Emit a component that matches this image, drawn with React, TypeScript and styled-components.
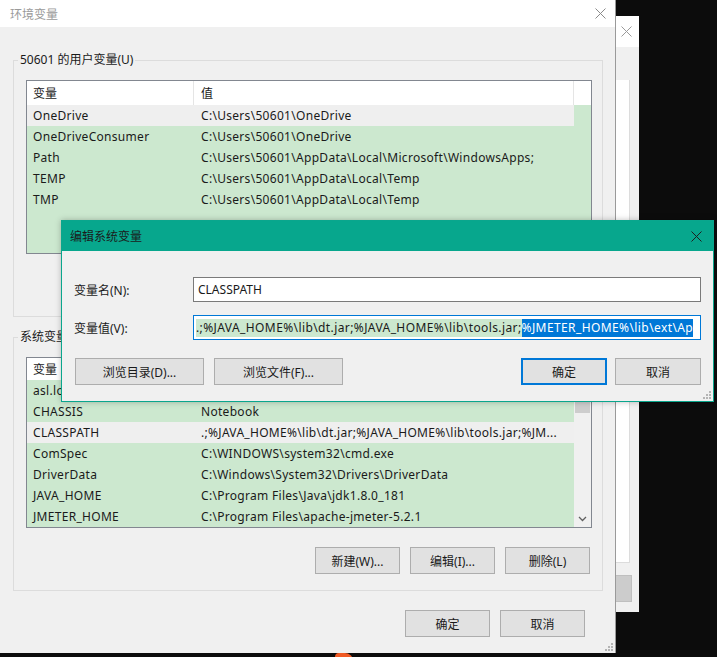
import React from "react";
import styled, { createGlobalStyle } from "styled-components";

const GlobalStyle = createGlobalStyle`
  html, body {
    margin: 0;
    padding: 0;
    background: #0c0c0c;
  }
  body {
    font-family: "Noto Sans", "Noto Sans CJK SC", sans-serif;
    font-size: 12px;
    color: #1a1a1a;
  }
  * {
    box-sizing: border-box;
  }
`;

type Col = { name: string; value: string; selected?: boolean };

const userVars: Col[] = [
  { name: "OneDrive", value: "C:\\Users\\50601\\OneDrive", selected: true },
  { name: "OneDriveConsumer", value: "C:\\Users\\50601\\OneDrive" },
  { name: "Path", value: "C:\\Users\\50601\\AppData\\Local\\Microsoft\\WindowsApps;" },
  { name: "TEMP", value: "C:\\Users\\50601\\AppData\\Local\\Temp" },
  { name: "TMP", value: "C:\\Users\\50601\\AppData\\Local\\Temp" },
];

const systemVars: Col[] = [
  { name: "asl.log", value: "Destination=file" },
  { name: "CHASSIS", value: "Notebook" },
  {
    name: "CLASSPATH",
    value: ".;%JAVA_HOME%\\lib\\dt.jar;%JAVA_HOME%\\lib\\tools.jar;%JM...",
    selected: true,
  },
  { name: "ComSpec", value: "C:\\WINDOWS\\system32\\cmd.exe" },
  { name: "DriverData", value: "C:\\Windows\\System32\\Drivers\\DriverData" },
  { name: "JAVA_HOME", value: "C:\\Program Files\\Java\\jdk1.8.0_181" },
  { name: "JMETER_HOME", value: "C:\\Program Files\\apache-jmeter-5.2.1" },
];

const CloseIcon = ({ color }: { color: string }) => (
  <svg width="11" height="11" viewBox="0 0 11 11">
    <path d="M0.5 0.5 L10.5 10.5 M10.5 0.5 L0.5 10.5" stroke={color} strokeWidth="1" fill="none" />
  </svg>
);

const Grip = () => (
  <GripBox width="10" height="10" viewBox="0 0 10 10">
    {[
      [8, 2],
      [8, 5],
      [5, 5],
      [8, 8],
      [5, 8],
      [2, 8],
    ].map(([x, y]) => (
      <rect key={`${x}-${y}`} x={x} y={y} width="2" height="2" fill="#b4b4b4" />
    ))}
  </GripBox>
);

const VarList = ({
  rows,
  height,
  headerHeight,
  scroll,
}: {
  rows: Col[];
  height: number;
  headerHeight: number;
  scroll?: boolean;
}) => (
  <ListView $height={height}>
    <ListMain>
      <Header $height={headerHeight}>
        <HeaderCell $width={167} $pad={6}>变量</HeaderCell>
        <HeaderCell $width={380} $pad={7}>值</HeaderCell>
        <HeaderFiller />
      </Header>
      {rows.map((r) => (
        <Row key={r.name}>
          <RowInner $selected={!!r.selected}>
            <Cell $width={167} $pad={6}>{r.name}</Cell>
            <Cell $width={380} $pad={7}>{r.value}</Cell>
          </RowInner>
        </Row>
      ))}
    </ListMain>
    {scroll && (
      <ScrollBar>
        <ScrollArrow>
          <svg width="9" height="6" viewBox="0 0 9 6">
            <path d="M1 5 L4.5 1.5 L8 5" stroke="#a0a0a0" strokeWidth="1.3" fill="none" />
          </svg>
        </ScrollArrow>
        <Thumb />
        <ScrollTrack />
        <ScrollArrow>
          <svg width="9" height="6" viewBox="0 0 9 6">
            <path d="M1 1 L4.5 4.5 L8 1" stroke="#606060" strokeWidth="1.3" fill="none" />
          </svg>
        </ScrollArrow>
      </ScrollBar>
    )}
  </ListView>
);

const App = () => {
  return (
    <>
      <GlobalStyle />
      <Desktop>
        <BackWindow>
          <BackTitle>
            <CloseIcon color="#9a9a9a" />
          </BackTitle>
          <BackBody>
            <BackPanel />
            <BackButton />
          </BackBody>
        </BackWindow>

        <MainWindow>
          <TitleBar>
            <WindowTitle>环境变量</WindowTitle>
            <CloseIcon color="#8a8a8a" />
          </TitleBar>
          <WindowBody>
            <GroupBox>
              <Legend>50601 的用户变量(U)</Legend>
              <VarList rows={userVars} height={174} headerHeight={24} />
              <ButtonRow>
                <Button $width={85}>新建(N)...</Button>
                <Button $width={85}>编辑(E)...</Button>
                <Button $width={85}>删除(D)</Button>
              </ButtonRow>
            </GroupBox>
            <GroupBox $gap={12}>
              <Legend>系统变量(S)</Legend>
              <VarList rows={systemVars} height={171} headerHeight={22} scroll />
              <ButtonRow>
                <Button $width={85}>新建(W)...</Button>
                <Button $width={85}>编辑(I)...</Button>
                <Button $width={85}>删除(L)</Button>
              </ButtonRow>
            </GroupBox>
            <FooterRow>
              <Button $width={85}>确定</Button>
              <Button $width={85}>取消</Button>
            </FooterRow>
          </WindowBody>
          <Grip />
        </MainWindow>

        <Dialog>
          <DialogTitle>
            <DialogCaption>编辑系统变量</DialogCaption>
            <CloseIcon color="#1f1f1f" />
          </DialogTitle>
          <DialogBody>
            <FieldRow>
              <FieldLabel>变量名(N):</FieldLabel>
              <TextField $pad={4}>CLASSPATH</TextField>
            </FieldRow>
            <FieldRow>
              <FieldLabel>变量值(V):</FieldLabel>
              <TextField $pad={2} $spacing={0.4} $focused>
                <PlainText>{".;%JAVA_HOME%\\lib\\dt.jar;%JAVA_HOME%\\lib\\tools.jar;"}</PlainText>
                <SelectedText>{"%JMETER_HOME%\\lib\\ext\\Ap"}</SelectedText>
              </TextField>
            </FieldRow>
            <DialogButtons>
              <Button $width={129}>浏览目录(D)...</Button>
              <Button $width={129}>浏览文件(F)...</Button>
              <Spacer />
              <Button $width={86} $default>确定</Button>
              <Button $width={86}>取消</Button>
            </DialogButtons>
          </DialogBody>
          <Grip />
        </Dialog>

        <TaskIcon />
      </Desktop>
    </>
  );
};

export default App;

const Desktop = styled.div`
  position: relative;
  width: 717px;
  height: 657px;
  overflow: hidden;
  background: #0c0c0c;
`;

const BackWindow = styled.div`
  position: absolute;
  left: 420px;
  top: 16px;
  width: 219px;
  height: 596px;
  background: #f0f0f0;
  display: flex;
  flex-direction: column;
`;
const BackTitle = styled.div`
  height: 31px;
  background: #ffffff;
  display: flex;
  align-items: center;
  justify-content: flex-end;
  padding-right: 7px;
`;
const BackBody = styled.div`
  flex: 1;
  display: flex;
  flex-direction: column;
  align-items: flex-end;
  padding-top: 33px;
`;
const BackPanel = styled.div`
  width: 200px;
  height: 483px;
  margin-right: 9px;
  background: #ffffff;
  border-right: 1px solid #dcdcdc;
  border-bottom: 1px solid #dcdcdc;
`;
const BackButton = styled.div`
  width: 200px;
  height: 27px;
  margin-top: 12px;
  margin-right: 7px;
  background: #cccccc;
  border: 1px solid #bfbfbf;
`;

const MainWindow = styled.div`
  position: absolute;
  left: 0;
  top: 0;
  width: 616px;
  height: 653px;
  background: #f0f0f0;
  border-right: 1px solid #9a9a9a;
  display: flex;
  flex-direction: column;
`;
const TitleBar = styled.div`
  height: 27px;
  background: #ffffff;
  display: flex;
  align-items: center;
  justify-content: space-between;
  padding: 0 9px 0 10px;
`;
const WindowTitle = styled.div`
  font-size: 12px;
  color: #9a9a9a;
`;
const WindowBody = styled.div`
  flex: 1;
  padding: 25px 12px 0 13px;
  display: flex;
  flex-direction: column;
`;

const GroupBox = styled.fieldset<{ $gap?: number }>`
  margin: ${(p) => p.$gap ?? 0}px 0 0 0;
  min-width: 0;
  border: 1px solid #dcdcdc;
  padding: 12px 10px 16px 12px;
`;
const Legend = styled.legend`
  margin-left: -8px;
  padding: 0 2px;
  font-size: 12px;
  line-height: 16px;
  color: #1a1a1a;
`;

const ListView = styled.div<{ $height: number }>`
  height: ${(p) => p.$height}px;
  border: 1px solid #828790;
  background: #cce8cf;
  display: flex;
  overflow: hidden;
`;
const ListMain = styled.div`
  flex: 1;
  min-width: 0;
  display: flex;
  flex-direction: column;
`;
const Header = styled.div<{ $height: number }>`
  height: ${(p) => p.$height}px;
  flex-shrink: 0;
  background: #ffffff;
  display: flex;
`;
const HeaderCell = styled.div<{ $width: number; $pad: number }>`
  width: ${(p) => p.$width}px;
  flex-shrink: 0;
  padding-left: ${(p) => p.$pad}px;
  border-right: 1px solid #e5e5e5;
  display: flex;
  align-items: center;
  color: #1a1a1a;
`;
const HeaderFiller = styled.div`
  flex: 1;
`;
const Row = styled.div`
  height: 21px;
  flex-shrink: 0;
  display: flex;
`;
const RowInner = styled.div<{ $selected: boolean }>`
  display: flex;
  align-items: center;
  background: ${(p) => (p.$selected ? "#efefef" : "transparent")};
`;
const Cell = styled.div<{ $width: number; $pad: number }>`
  width: ${(p) => p.$width}px;
  padding-left: ${(p) => p.$pad}px;
  white-space: nowrap;
  overflow: hidden;
  letter-spacing: 0.3px;
  color: #1a1a1a;
`;
const ScrollBar = styled.div`
  width: 17px;
  flex-shrink: 0;
  background: #f0f0f0;
  display: flex;
  flex-direction: column;
`;
const ScrollArrow = styled.div`
  height: 17px;
  display: flex;
  align-items: center;
  justify-content: center;
`;
const Thumb = styled.div`
  height: 38px;
  margin: 0 1px;
  background: #cdcdcd;
`;
const ScrollTrack = styled.div`
  flex: 1;
`;

const ButtonRow = styled.div`
  display: flex;
  justify-content: flex-end;
  gap: 10px;
  margin-top: 19px;
  padding-right: 2px;
`;
const FooterRow = styled.div`
  display: flex;
  justify-content: flex-end;
  gap: 10px;
  margin-top: 19px;
  padding-right: 18px;
`;
const Button = styled.div<{ $width: number; $default?: boolean }>`
  width: ${(p) => p.$width}px;
  height: 27px;
  background: #e1e1e1;
  border: ${(p) => (p.$default ? "2px solid #0078d7" : "1px solid #adadad")};
  display: flex;
  align-items: center;
  justify-content: center;
  font-size: 12px;
  color: #1a1a1a;
  white-space: nowrap;
`;

const Dialog = styled.div`
  position: absolute;
  left: 61px;
  top: 220px;
  width: 653px;
  background: #f0f0f0;
  border: 1px solid #0aa68d;
  box-shadow: 0 0 6px rgba(0, 0, 0, 0.25);
  display: flex;
  flex-direction: column;
`;
const DialogTitle = styled.div`
  height: 30px;
  background: #07a78d;
  display: flex;
  align-items: center;
  justify-content: space-between;
  padding: 0 11px 0 8px;
`;
const DialogCaption = styled.div`
  font-size: 12px;
  color: #1b1b1b;
`;
const DialogBody = styled.div`
  padding: 26px 12px 16px 12px;
  display: flex;
  flex-direction: column;
`;
const FieldRow = styled.div`
  display: flex;
  align-items: center;
  margin-bottom: 13px;
`;
const FieldLabel = styled.div`
  width: 119px;
  flex-shrink: 0;
  color: #1a1a1a;
`;
const TextField = styled.div<{ $pad: number; $spacing?: number; $focused?: boolean }>`
  flex: 1;
  min-width: 0;
  height: 25px;
  background: #ffffff;
  border: 1px solid ${(p) => (p.$focused ? "#0078d7" : "#7a7a7a")};
  padding-left: ${(p) => p.$pad}px;
  letter-spacing: ${(p) => p.$spacing ?? 0}px;
  display: flex;
  align-items: center;
  white-space: nowrap;
  overflow: hidden;
  color: #1a1a1a;
`;
const PlainText = styled.span`
  background: #cce8cf;
  line-height: 18px;
`;
const SelectedText = styled.span`
  background: #0078d7;
  color: #ffffff;
  line-height: 18px;
`;
const DialogButtons = styled.div`
  display: flex;
  gap: 10px;
  margin-top: 5px;
  padding-left: 1px;
  & > :last-child {
    margin-left: -2px;
  }
`;
const Spacer = styled.div`
  flex: 1;
`;
const GripBox = styled.svg`
  position: absolute;
  right: 2px;
  bottom: 2px;
`;
const TaskIcon = styled.div`
  position: absolute;
  left: 335px;
  top: 653px;
  width: 18px;
  height: 8px;
  border-radius: 4px 8px 0 0;
  background: #f05a24;
`;
